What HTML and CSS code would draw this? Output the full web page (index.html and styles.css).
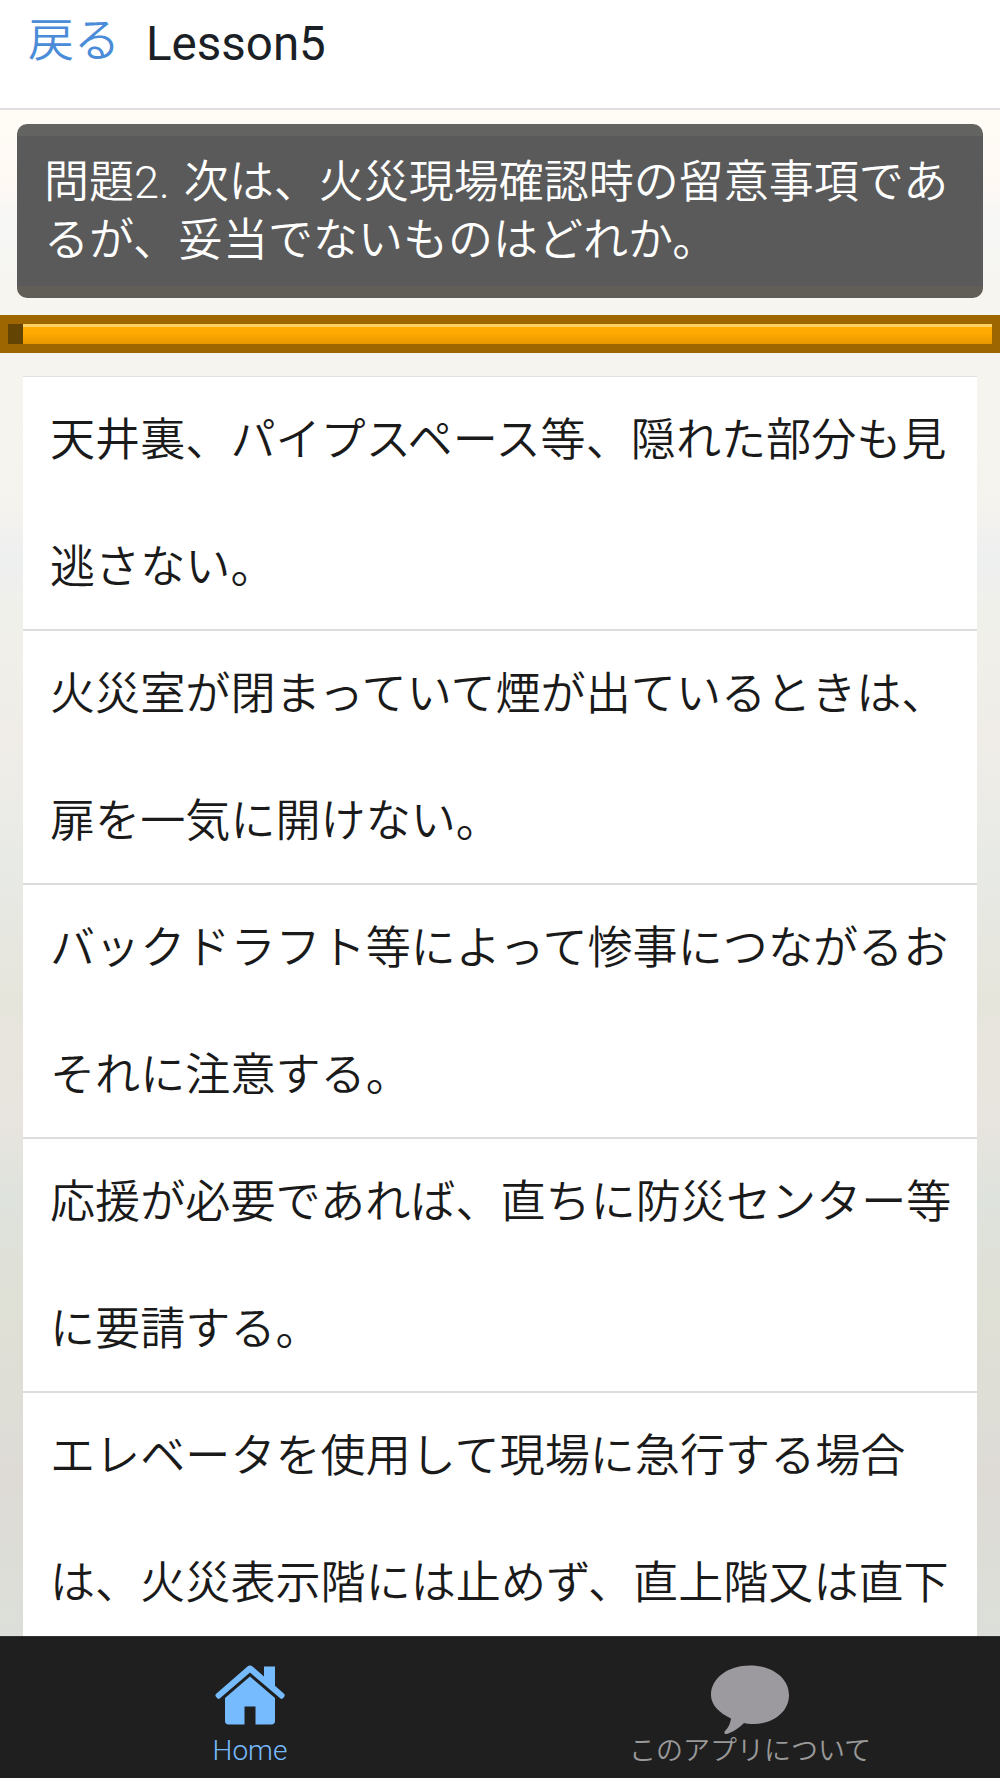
FILE: index.html
```html
<!DOCTYPE html>
<html lang="ja">
<head>
<meta charset="utf-8">
<title>Lesson5</title>
<link rel="stylesheet" href="styles.css">
</head>
<body>
<div class="app">
  <header class="header">
    <a class="back">戻る</a>
    <h1 class="title">Lesson5</h1>
  </header>
  <main class="content">
    <div class="question">問題2. 次は、火災現場確認時の留意事項であるが、妥当でないものはどれか。</div>
    <div class="progress"><div class="progress-start"></div><div class="progress-bar"></div></div>
    <ul class="answers">
      <li class="answer">天井裏、パイプスペース等、隠れた部分も見逃さない。</li>
      <li class="answer">火災室が閉まっていて煙が出ているときは、扉を一気に開けない。</li>
      <li class="answer">バックドラフト等によって惨事につながるおそれに注意する。</li>
      <li class="answer">応援が必要であれば、直ちに防災センター等に要請する。</li>
      <li class="answer">エレベータを使用して現場に急行する場合は、火災表示階には止めず、直上階又は直下階で降りる。</li>
    </ul>
  </main>
  <nav class="tabs">
    <div class="tab tab-active">
      <svg class="tab-icon" viewBox="0 0 70 60" width="70" height="60" aria-hidden="true">
        <path fill="#77bbff" d="M35 0.500c1 0 1.800.4 2.500 1L49 11.500V1.500h11v19.200l9 8c1 .9 1 2 .2 3l-1 1.400c-.8 1-2 1-3 .2L35 7.500 5 33.300c-1 .8-2.200.8-3-.2l-1-1.400c-.8-1-.8-2.100.2-3L32.500 1.500c.7-.6 1.500-1 2.500-1z"/>
        <path fill="#77bbff" d="M35 11.500 60 33v23c0 2-1.200 3.500-3.500 3.500H40.500V41.500h-11V59.500H13.500C11.200 59.500 10 58 10 56V33z"/>
      </svg>
      <span class="tab-label">Home</span>
    </div>
    <div class="tab">
      <svg class="tab-icon" viewBox="0 0 80 70" width="80" height="70" aria-hidden="true">
        <path fill="#9c9a9e" d="M40 0.500C62 .5 79 13 79 30c0 17-16 29-36 29-3.500 0-6.500-.4-9-1-4.500 5-12 9.500-17 11-2 .5-3.500-1-2-3 3.500-3.500 5.500-8 6-12.500C9.500 48 1 40 1 30 1 13 18 .5 40 .5z"/>
      </svg>
      <span class="tab-label">このアプリについて</span>
    </div>
  </nav>
</div>
</body>
</html>
```
FILE: styles.css
```css
* { box-sizing: border-box; }
html, body { margin: 0; padding: 0; }
body {
  font-family: Roboto, "Noto Sans CJK JP", sans-serif;
  background: #fff;
}
.app {
  width: 1000px;
  height: 1778px;
  overflow: hidden;
  display: flex;
  flex-direction: column;
}
.header {
  flex: none;
  height: 110px;
  background: #fff;
  border-bottom: 2px solid #e0e0e0;
  display: flex;
  align-items: flex-start;
  padding: 12px 0 0 28px;
}
.back {
  font-size: 46px;
  line-height: 56px;
  font-weight: 350;
  color: #4a8cd8;
}
.title {
  margin: 2px 0 0 26px;
  font-size: 47.500px;
  line-height: 60px;
  font-weight: 380;
  color: #1b1f26;
}
.content {
  flex: 1;
  min-height: 0;
  overflow: hidden;
  padding-top: 14px;
  background: linear-gradient(180deg,
    #fffcf6 0, #fff9f4 70px, #f7f7f6 110px, #f6f5ef 200px, #f5f3ed 390px,
    #eeeff0 450px, #f0f0ea 500px, #f0ede8 630px, #e8eae6 750px,
    #e6e5dc 890px, #e8e4df 1010px, #dfe3dd 1090px, #dfe0d6 1190px,
    #dedbd6 1370px, #dcdfd9 1526px);
}
.question {
  margin: 0 17px;
  height: 174px;
  border-radius: 10px;
  background: #5a5a5a;
  border-top: 12px solid #636461;
  border-bottom: 12px solid #615e58;
  color: #fff;
  font-size: 45px;
  line-height: 58px;
  font-weight: 350;
  word-spacing: 3px;
  padding: 18px 26px 0 27px;
}
.progress {
  margin-top: 17px;
  height: 38px;
  background: #9e6600;
  padding: 9px 8px;
  display: flex;
}
.progress-start {
  flex: none;
  width: 15px;
  background: #644402;
}
.progress-bar {
  flex: 1;
  border-top: 3px solid #ffd064;
  background: linear-gradient(180deg, #ffad05 0%, #ffa800 40%, #e89800 100%);
}
.answers {
  list-style: none;
  margin: 23px 23px 0;
  padding: 0;
  background: #fff;
}
.answer {
  background: #fff;
  border-top: 2px solid #dddddd;
  margin-top: -2px;
  padding: 0 20px 0 27px;
  color: #1a1a1a;
  font-size: 45.100px;
  line-height: 127px;
  font-weight: 350;
}
.answer:first-child {
  border-top: 1px solid #e2e2e2;
  margin-top: 0;
}
.tabs {
  flex: none;
  height: 142px;
  background: #1f1f1f;
  border-top: 1px solid #333;
  display: flex;
}
.tab {
  flex: 1;
  position: relative;
  display: flex;
  flex-direction: column;
  align-items: center;
  padding-top: 28px;
  color: #999;
}
.tab-active { color: #77bbff; }
.tab-icon { flex: none; display: block; }
.tab-label {
  position: absolute;
  top: 97px;
  left: 0;
  right: 0;
  text-align: center;
  font-size: 27px;
  line-height: 34px;
  font-weight: 350;
}
.tab-active .tab-label { font-size: 28px; }
```
